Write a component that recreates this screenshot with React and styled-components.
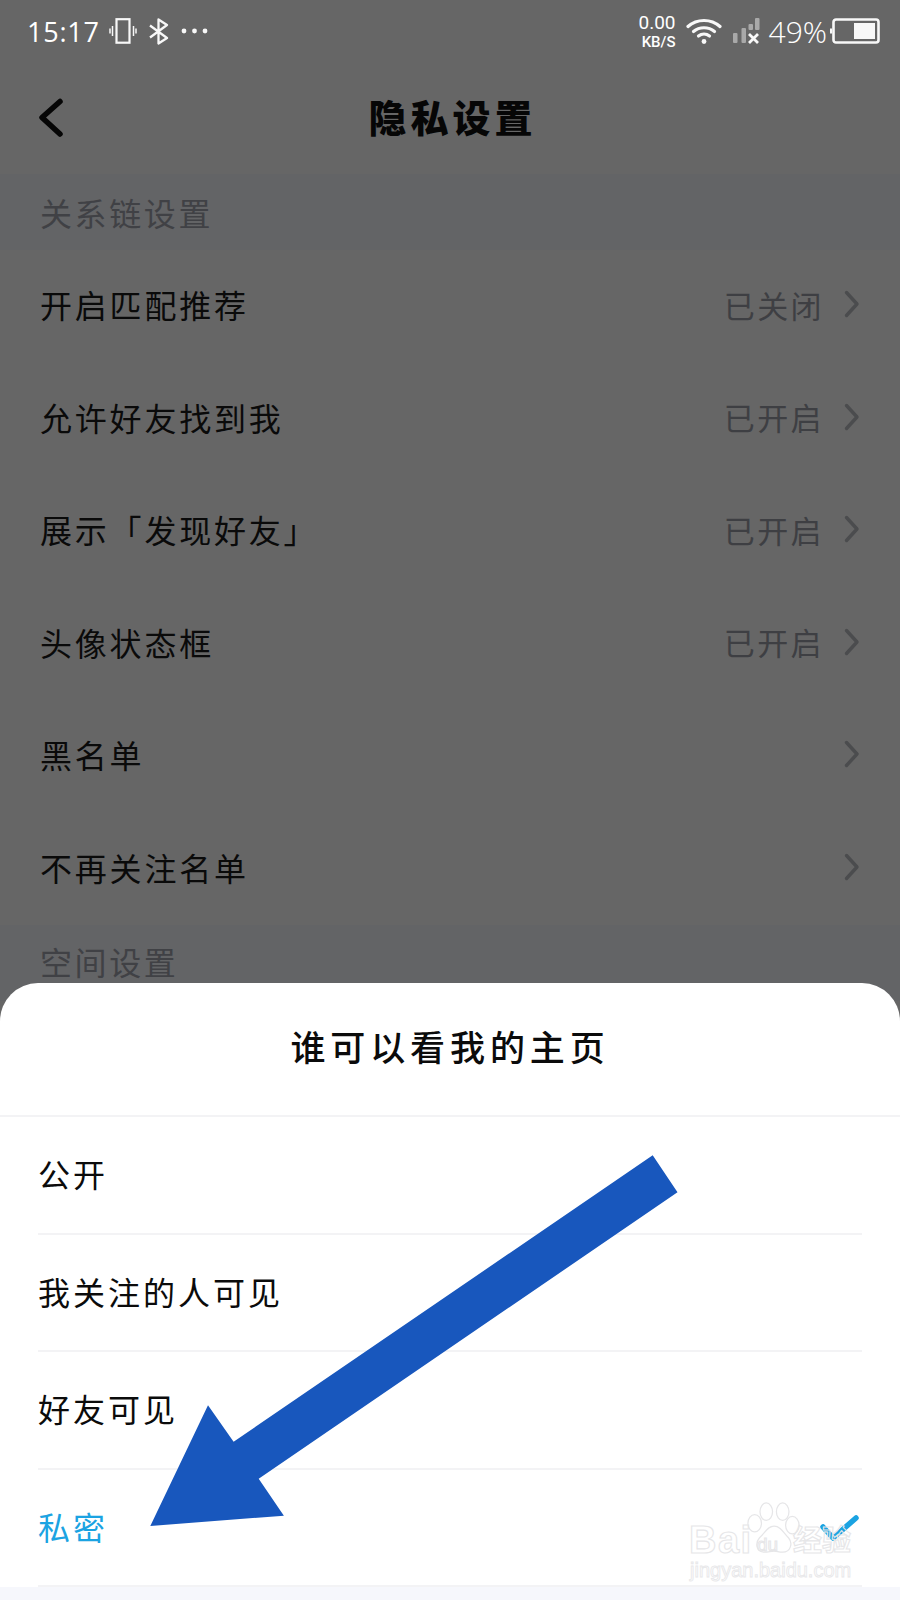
import React from "react";
import styled, { createGlobalStyle } from "styled-components";

const CJK = `"Noto Sans CJK SC", "Noto Sans", sans-serif`;

const Global = createGlobalStyle`
  html, body { margin: 0; padding: 0; background: #666; }
  * { box-sizing: border-box; }
`;

const Page = styled.div`
  position: relative;
  width: 900px;
  height: 1600px;
  overflow: hidden;
  background: #666666;
  font-family: ${CJK};
`;

const StatusBar = styled.div`
  height: 58px;
  padding: 4px 20px 0 27px;
  display: flex;
  align-items: center;
  color: #ffffff;
`;

const Time = styled.span`
  font-family: "Open Sans", sans-serif;
  font-size: 27px;
  font-weight: 400;
  letter-spacing: 0.8px;
  margin-right: 9px;
`;

const StatusIcon = styled.svg`
  display: block;
  flex: none;
  margin-right: ${(p) => p.$gap ?? 0}px;
`;

const Spacer = styled.div`
  flex: 1;
`;

const Speed = styled.div`
  display: flex;
  flex-direction: column;
  align-items: flex-end;
  font-family: "Roboto", sans-serif;
  margin-right: 10px;
  line-height: 1;
`;

const SpeedValue = styled.span`
  font-size: 19px;
  height: 22px;
`;

const SpeedUnit = styled.span`
  font-size: 15px;
  font-weight: 500;
  height: 15px;
`;

const Battery = styled.span`
  font-family: "Open Sans", sans-serif;
  font-size: 30px;
  font-weight: 300;
  margin-right: 3px;
`;

const Nav = styled.div`
  position: relative;
  height: 116px;
  display: flex;
  align-items: center;
  justify-content: center;
  padding-left: 5px;
`;

const NavBack = styled.svg`
  position: absolute;
  left: 36px;
  top: 38px;
`;

const NavTitle = styled.div`
  font-size: 38px;
  font-weight: 900;
  letter-spacing: 4px;
  color: #060606;
  line-height: 1;
`;

const SectionHeader = styled.div`
  height: 76px;
  padding: 0 40px ${(p) => p.$lift ?? 0}px;
  display: flex;
  align-items: center;
  background: #636466;
  color: #404145;
  font-size: 32px;
  letter-spacing: 2.6px;
  line-height: 1;
`;

const Row = styled.div`
  height: 112.5px;
  padding: 0 40px 4px;
  display: flex;
  align-items: center;
  font-size: 32px;
  letter-spacing: 2.8px;
  color: #0a0a0a;
`;

const RowLabel = styled.span`
  flex: 1;
`;

const RowValue = styled.span`
  font-size: 31px;
  letter-spacing: 2.4px;
  color: #3e3f43;
  margin-right: 20px;
`;

const Sheet = styled.div`
  position: absolute;
  left: 0;
  right: 0;
  top: 983px;
  bottom: 0;
  background: #ffffff;
  border-radius: 38px 38px 0 0;
  display: flex;
  flex-direction: column;
`;

const SheetTitle = styled.div`
  height: 134px;
  flex: none;
  display: flex;
  align-items: center;
  justify-content: center;
  padding-bottom: 7px;
  font-size: 35px;
  font-weight: 500;
  letter-spacing: 4.9px;
  color: #0b0b0b;
  border-bottom: 2px solid #f3f3f5;
`;

const OptionList = styled.div`
  margin: 0 38px;
`;

const Option = styled.div`
  height: 117.5px;
  display: flex;
  align-items: center;
  padding-bottom: 3px;
  font-size: 32px;
  letter-spacing: 3px;
  color: ${(p) => (p.$active ? "#1ba3e2" : "#0b0b0b")};
  border-bottom: 2px solid #f3f3f5;
`;

const SheetFoot = styled.div`
  flex: 1;
  background: #f6f7fc;
`;

const Annotation = styled.svg`
  position: absolute;
  left: 0;
  top: 0;
  pointer-events: none;
`;

const Watermark = styled.div`
  position: absolute;
  left: 688px;
  top: 1500px;
  width: 170px;
  height: 82px;
  color: transparent;
  -webkit-text-stroke: 1.1px #e6e6e8;
  font-family: "Liberation Sans", sans-serif;
`;

const WatermarkBai = styled.span`
  position: absolute;
  left: 1px;
  top: 20px;
  font-size: 38px;
  font-weight: 700;
  letter-spacing: 1.5px;
  line-height: 1.1;
`;

const WatermarkDu = styled.span`
  position: absolute;
  left: 69px;
  top: 35px;
  font-size: 19px;
  line-height: 1;
`;

const WatermarkCn = styled.span`
  position: absolute;
  left: 105px;
  top: 23px;
  font-family: ${CJK};
  font-size: 29px;
  font-weight: 700;
  line-height: 1.1;
`;

const WatermarkSite = styled.span`
  position: absolute;
  left: 2px;
  top: 60px;
  font-size: 20px;
  line-height: 1;
  white-space: nowrap;
  -webkit-text-stroke: 0.9px #e8e8ea;
`;

const WatermarkPaw = styled.svg`
  position: absolute;
  left: 56px;
  top: 2px;
`;

function Chevron() {
  return (
    <svg width="16" height="28" viewBox="0 0 16 28" fill="none" style={{ display: "block", flex: "none" }}>
      <path d="M2.5 2.5 13 14 2.5 25.5" stroke="#4b4c4e" strokeWidth="3.4" strokeLinecap="round" strokeLinejoin="round" />
    </svg>
  );
}

const rows = [
  ["开启匹配推荐", "已关闭"],
  ["允许好友找到我", "已开启"],
  ["展示「发现好友」", "已开启"],
  ["头像状态框", "已开启"],
  ["黑名单", ""],
  ["不再关注名单", ""],
];

const options = ["公开", "我关注的人可见", "好友可见"];

export default function App() {
  return (
    <Page>
      <Global />
      <StatusBar>
        <Time>15:17</Time>
        <StatusIcon $gap={12} width="28" height="26" viewBox="0 0 28 26" fill="none" stroke="#f8f8f8">
          <rect x="7.5" y="1.2" width="13" height="23.5" strokeWidth="2.2" />
          <path d="M3.5 8v10M1 10.5v5M24.5 8v10M27 10.5v5" strokeWidth="1.5" />
        </StatusIcon>
        <StatusIcon $gap={12} width="20" height="27" viewBox="0 0 20 27" fill="none" stroke="#f8f8f8" strokeWidth="2.3">
          <path d="M1 7.5 18 20 9.5 25.5V1.5L18 7 1 19.5" strokeLinejoin="round" />
        </StatusIcon>
        <StatusIcon width="27" height="6" viewBox="0 0 27 6" fill="#f8f8f8">
          <circle cx="3" cy="3" r="2.4" />
          <circle cx="13.5" cy="3" r="2.4" />
          <circle cx="24" cy="3" r="2.4" />
        </StatusIcon>
        <Spacer />
        <Speed>
          <SpeedValue>0.00</SpeedValue>
          <SpeedUnit>KB/S</SpeedUnit>
        </Speed>
        <StatusIcon $gap={10} width="36" height="26" viewBox="0 0 36 26" fill="none" stroke="#f8f8f8" strokeWidth="3.2" strokeLinecap="round">
          <path d="M2 8.500C11 .5 25 .5 34 8.500" />
          <path d="M7.500 13.500c6-5 15-5 21 0" />
          <path d="M12.500 18c3.200-2.500 7.800-2.500 11 0" />
          <circle cx="18" cy="23.500" r="2.400" fill="#f8f8f8" stroke="none" />
        </StatusIcon>
        <StatusIcon $gap={9} width="28" height="26" viewBox="0 0 28 26" fill="#a9a9a9">
          <rect x="1" y="15" width="4.500" height="10" rx="1" />
          <rect x="9.500" y="10" width="4.500" height="15" rx="1" />
          <rect x="16.500" y="6" width="4.500" height="6" rx="1" />
          <rect x="23" y="0" width="4.500" height="12" rx="1" />
          <path d="M17 16l9 9M26 16l-9 9" stroke="#f8f8f8" strokeWidth="2.800" fill="none" />
        </StatusIcon>
        <Battery>49%</Battery>
        <StatusIcon width="50" height="26" viewBox="0 0 50 26" fill="none">
          <path d="M0 10.500h2v5H0z" fill="#f8f8f8" />
          <rect x="3.500" y="1.500" width="45" height="23" rx="2.500" stroke="#f8f8f8" strokeWidth="2.600" />
          <rect x="24" y="5" width="21" height="16" fill="#f8f8f8" />
        </StatusIcon>
      </StatusBar>
      <Nav>
        <NavBack width="28" height="42" viewBox="0 0 28 42" fill="none">
          <path d="M24 5.500 6 21.500 24 38" stroke="#060606" strokeWidth="5.500" strokeLinecap="round" strokeLinejoin="round" />
        </NavBack>
        <NavTitle>隐私设置</NavTitle>
      </Nav>
      <SectionHeader>关系链设置</SectionHeader>
      {rows.map(([label, value]) => (
        <Row key={label}>
          <RowLabel>{label}</RowLabel>
          {value && <RowValue>{value}</RowValue>}
          <Chevron />
        </Row>
      ))}
      <SectionHeader $lift={4}>空间设置</SectionHeader>

      <Sheet>
        <SheetTitle>谁可以看我的主页</SheetTitle>
        <OptionList>
          {options.map((o) => (
            <Option key={o}>{o}</Option>
          ))}
          <Option $active>私密</Option>
        </OptionList>
        <SheetFoot />
      </Sheet>

      <Annotation width="900" height="1600" viewBox="0 0 900 1600">
        <path d="M823 1527 833 1538 856 1518" fill="none" stroke="#1ba3e2" strokeWidth="5.500" strokeLinecap="round" strokeLinejoin="round" />
        <polygon points="652.7,1155.3 677.5,1192.3 258.7,1478.7 283.9,1515.7 150.3,1526 208,1405.3 233.6,1441.7" fill="#1857bd" />
      </Annotation>

      <Watermark>
        <WatermarkBai>Bai</WatermarkBai>
        <WatermarkPaw width="60" height="56" viewBox="0 0 60 58" fill="none" stroke="#e6e6e8" strokeWidth="1.300">
          <ellipse cx="10" cy="22" rx="7" ry="9" />
          <ellipse cx="22" cy="10" rx="6.500" ry="9" />
          <ellipse cx="39" cy="10" rx="6.500" ry="9" />
          <ellipse cx="49" cy="24" rx="7" ry="9" />
          <path d="M30 25c7 0 10 7 15 12 5 6 2 15-6 15-4 0-6-1-9-1s-6 1-10 1c-8 0-10-9-5-15 6-5 8-12 15-12Z" />
        </WatermarkPaw>
        <WatermarkDu>du</WatermarkDu>
        <WatermarkCn>经验</WatermarkCn>
        <WatermarkSite>jingyan.baidu.com</WatermarkSite>
      </Watermark>
    </Page>
  );
}
